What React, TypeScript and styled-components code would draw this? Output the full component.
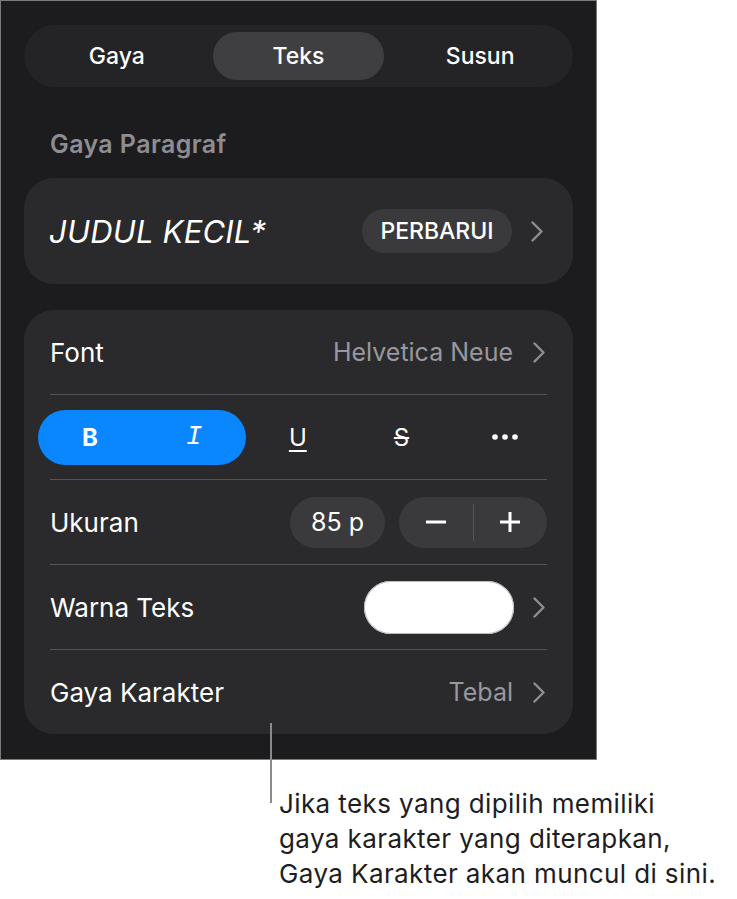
import React from "react";
import styled, { createGlobalStyle } from "styled-components";

const GlobalStyle = createGlobalStyle`
  html, body {
    margin: 0;
    padding: 0;
    background: #ffffff;
  }
  body {
    font-family: Inter, "Liberation Sans", "DejaVu Sans", sans-serif;
    -webkit-font-smoothing: antialiased;
  }
`;

const Page = styled.div`
  position: relative;
  width: 737px;
  height: 899px;
`;

const Panel = styled.div`
  box-sizing: border-box;
  width: 597px;
  height: 760px;
  background: #1c1c1e;
  border: 1px solid #7c7c7e;
  padding: 24px 23px 0 23px;
  display: flex;
  flex-direction: column;
`;

const Segmented = styled.div`
  box-sizing: border-box;
  height: 62px;
  padding: 7px;
  border-radius: 31px;
  background: #242426;
  display: grid;
  grid-template-columns: repeat(3, 1fr);
  gap: 10px;
`;

const Tab = styled.div<{ $active?: boolean }>`
  display: flex;
  align-items: center;
  justify-content: center;
  border-radius: 25px;
  background: ${(p) => (p.$active ? "#3f3f42" : "transparent")};
  color: #ffffff;
  font-size: 23px;
  font-weight: 500;
`;

const SectionLabel = styled.div`
  margin-top: 42px;
  padding-left: 26px;
  font-size: 25px;
  letter-spacing: 0.4px;
  line-height: 30px;
  font-weight: 600;
  color: #8d8d92;
`;

const Card = styled.div<{ $top: number }>`
  margin-top: ${(p) => p.$top}px;
  background: #2a2a2c;
  border-radius: 30px;
`;

const StyleCard = styled(Card)`
  height: 106px;
  box-sizing: border-box;
  padding: 0 28px 0 25px;
  display: flex;
  align-items: center;
`;

const StyleName = styled.div`
  flex: 1;
  font-size: 31px;
  font-style: italic;
  font-weight: 400;
  letter-spacing: 0.2px;
  color: #ffffff;
`;

const UpdateButton = styled.div`
  width: 150px;
  height: 44px;
  border-radius: 22px;
  background: #3a3a3c;
  display: flex;
  align-items: center;
  justify-content: center;
  font-size: 23px;
  font-weight: 500;
  color: #ffffff;
  margin-right: 19px;
`;

const ListCard = styled(Card)`
  padding: 0 26px;
`;

const Row = styled.div`
  height: 84px;
  display: flex;
  align-items: center;
  gap: 14px;
`;

const Divider = styled.div`
  height: 1px;
  background: #545457;
`;

const Label = styled.div`
  flex: 1;
  font-size: 26px;
  color: #ffffff;
`;

const Value = styled.div`
  font-size: 25px;
  color: #98989e;
  margin-right: 6px;
`;

const ChevronSvg = styled.svg`
  flex: none;
  margin-right: 2px;
`;

const FormatRow = styled.div`
  height: 84px;
  margin: 0 -10px 0 -12px;
  display: flex;
  align-items: center;
`;

const SelectedGroup = styled.div`
  width: 208px;
  height: 55px;
  border-radius: 28px;
  background: #0a86ff;
  display: grid;
  grid-template-columns: 1fr 1fr;
`;

const FormatButton = styled.div`
  flex: 1;
  height: 55px;
  display: flex;
  align-items: center;
  justify-content: center;
  color: #ffffff;
  font-size: 24px;
`;

const BoldGlyph = styled.span`
  font-weight: 700;
`;

const ItalicGlyph = styled.span`
  font-family: "Liberation Mono", "DejaVu Sans Mono", monospace;
  font-style: italic;
  font-size: 27px;
`;

const UnderlineGlyph = styled.span`
  text-decoration: underline;
  text-decoration-thickness: 2px;
  text-underline-offset: 4px;
`;

const StrikeGlyph = styled.span`
  text-decoration: line-through;
  text-decoration-thickness: 2px;
`;

const SizeField = styled.div`
  width: 95px;
  height: 51px;
  border-radius: 26px;
  background: #3a3a3c;
  display: flex;
  align-items: center;
  justify-content: center;
  font-size: 25px;
  color: #ffffff;
`;

const Stepper = styled.div`
  width: 148px;
  height: 51px;
  border-radius: 26px;
  background: #3a3a3c;
  display: grid;
  grid-template-columns: 1fr 1px 1fr;
  align-items: center;
`;

const StepperSep = styled.div`
  height: 37px;
  background: #55555a;
`;

const StepperButton = styled.div`
  display: flex;
  align-items: center;
  justify-content: center;
`;

const Swatch = styled.div`
  width: 150px;
  height: 53px;
  border-radius: 27px;
  background: #ffffff;
  box-shadow: inset 0 0 0 1px #b9b9bb;
  margin-right: 5px;
`;

const Caption = styled.div`
  margin: 26px 0 0 279px;
  font-size: 26px;
  letter-spacing: 0.4px;
  line-height: 35px;
  color: #1d1d1f;
`;

const Leader = styled.div`
  position: absolute;
  left: 270px;
  top: 723px;
  width: 2px;
  height: 80px;
  background: #8a8a8c;
`;

const Chevron = () => (
  <ChevronSvg width="12" height="21" viewBox="0 0 12 21">
    <polyline
      points="1.5,1.5 10.5,10.5 1.5,19.5"
      fill="none"
      stroke="#8e8e93"
      strokeWidth="2.4"
      strokeLinecap="round"
      strokeLinejoin="round"
    />
  </ChevronSvg>
);

const Ellipsis = () => (
  <svg width="26" height="6" viewBox="0 0 26 6">
    <circle cx="3" cy="3" r="2.8" fill="#fff" />
    <circle cx="13" cy="3" r="2.8" fill="#fff" />
    <circle cx="23" cy="3" r="2.8" fill="#fff" />
  </svg>
);

const Minus = () => (
  <svg width="22" height="22" viewBox="0 0 22 22">
    <line x1="1" y1="11" x2="21" y2="11" stroke="#fff" strokeWidth="3" />
  </svg>
);

const Plus = () => (
  <svg width="22" height="22" viewBox="0 0 22 22">
    <line x1="1" y1="11" x2="21" y2="11" stroke="#fff" strokeWidth="3" />
    <line x1="11" y1="1" x2="11" y2="21" stroke="#fff" strokeWidth="3" />
  </svg>
);

export default function App() {
  return (
    <Page>
      <GlobalStyle />
      <Panel>
        <Segmented>
          <Tab>Gaya</Tab>
          <Tab $active>Teks</Tab>
          <Tab>Susun</Tab>
        </Segmented>

        <SectionLabel>Gaya Paragraf</SectionLabel>

        <StyleCard $top={19}>
          <StyleName>JUDUL KECIL*</StyleName>
          <UpdateButton>PERBARUI</UpdateButton>
          <Chevron />
        </StyleCard>

        <ListCard $top={26}>
          <Row>
            <Label>Font</Label>
            <Value>Helvetica Neue</Value>
            <Chevron />
          </Row>
          <Divider />
          <FormatRow>
            <SelectedGroup>
              <FormatButton>
                <BoldGlyph>B</BoldGlyph>
              </FormatButton>
              <FormatButton>
                <ItalicGlyph>I</ItalicGlyph>
              </FormatButton>
            </SelectedGroup>
            <FormatButton>
              <UnderlineGlyph>U</UnderlineGlyph>
            </FormatButton>
            <FormatButton>
              <StrikeGlyph>S</StrikeGlyph>
            </FormatButton>
            <FormatButton>
              <Ellipsis />
            </FormatButton>
          </FormatRow>
          <Divider />
          <Row>
            <Label>Ukuran</Label>
            <SizeField>85 p</SizeField>
            <Stepper>
              <StepperButton>
                <Minus />
              </StepperButton>
              <StepperSep />
              <StepperButton>
                <Plus />
              </StepperButton>
            </Stepper>
          </Row>
          <Divider />
          <Row>
            <Label>Warna Teks</Label>
            <Swatch />
            <Chevron />
          </Row>
          <Divider />
          <Row>
            <Label>Gaya Karakter</Label>
            <Value>Tebal</Value>
            <Chevron />
          </Row>
        </ListCard>
      </Panel>

      <Leader />

      <Caption>
        Jika teks yang dipilih memiliki
        <br />
        gaya karakter yang diterapkan,
        <br />
        Gaya Karakter akan muncul di sini.
      </Caption>
    </Page>
  );
}
